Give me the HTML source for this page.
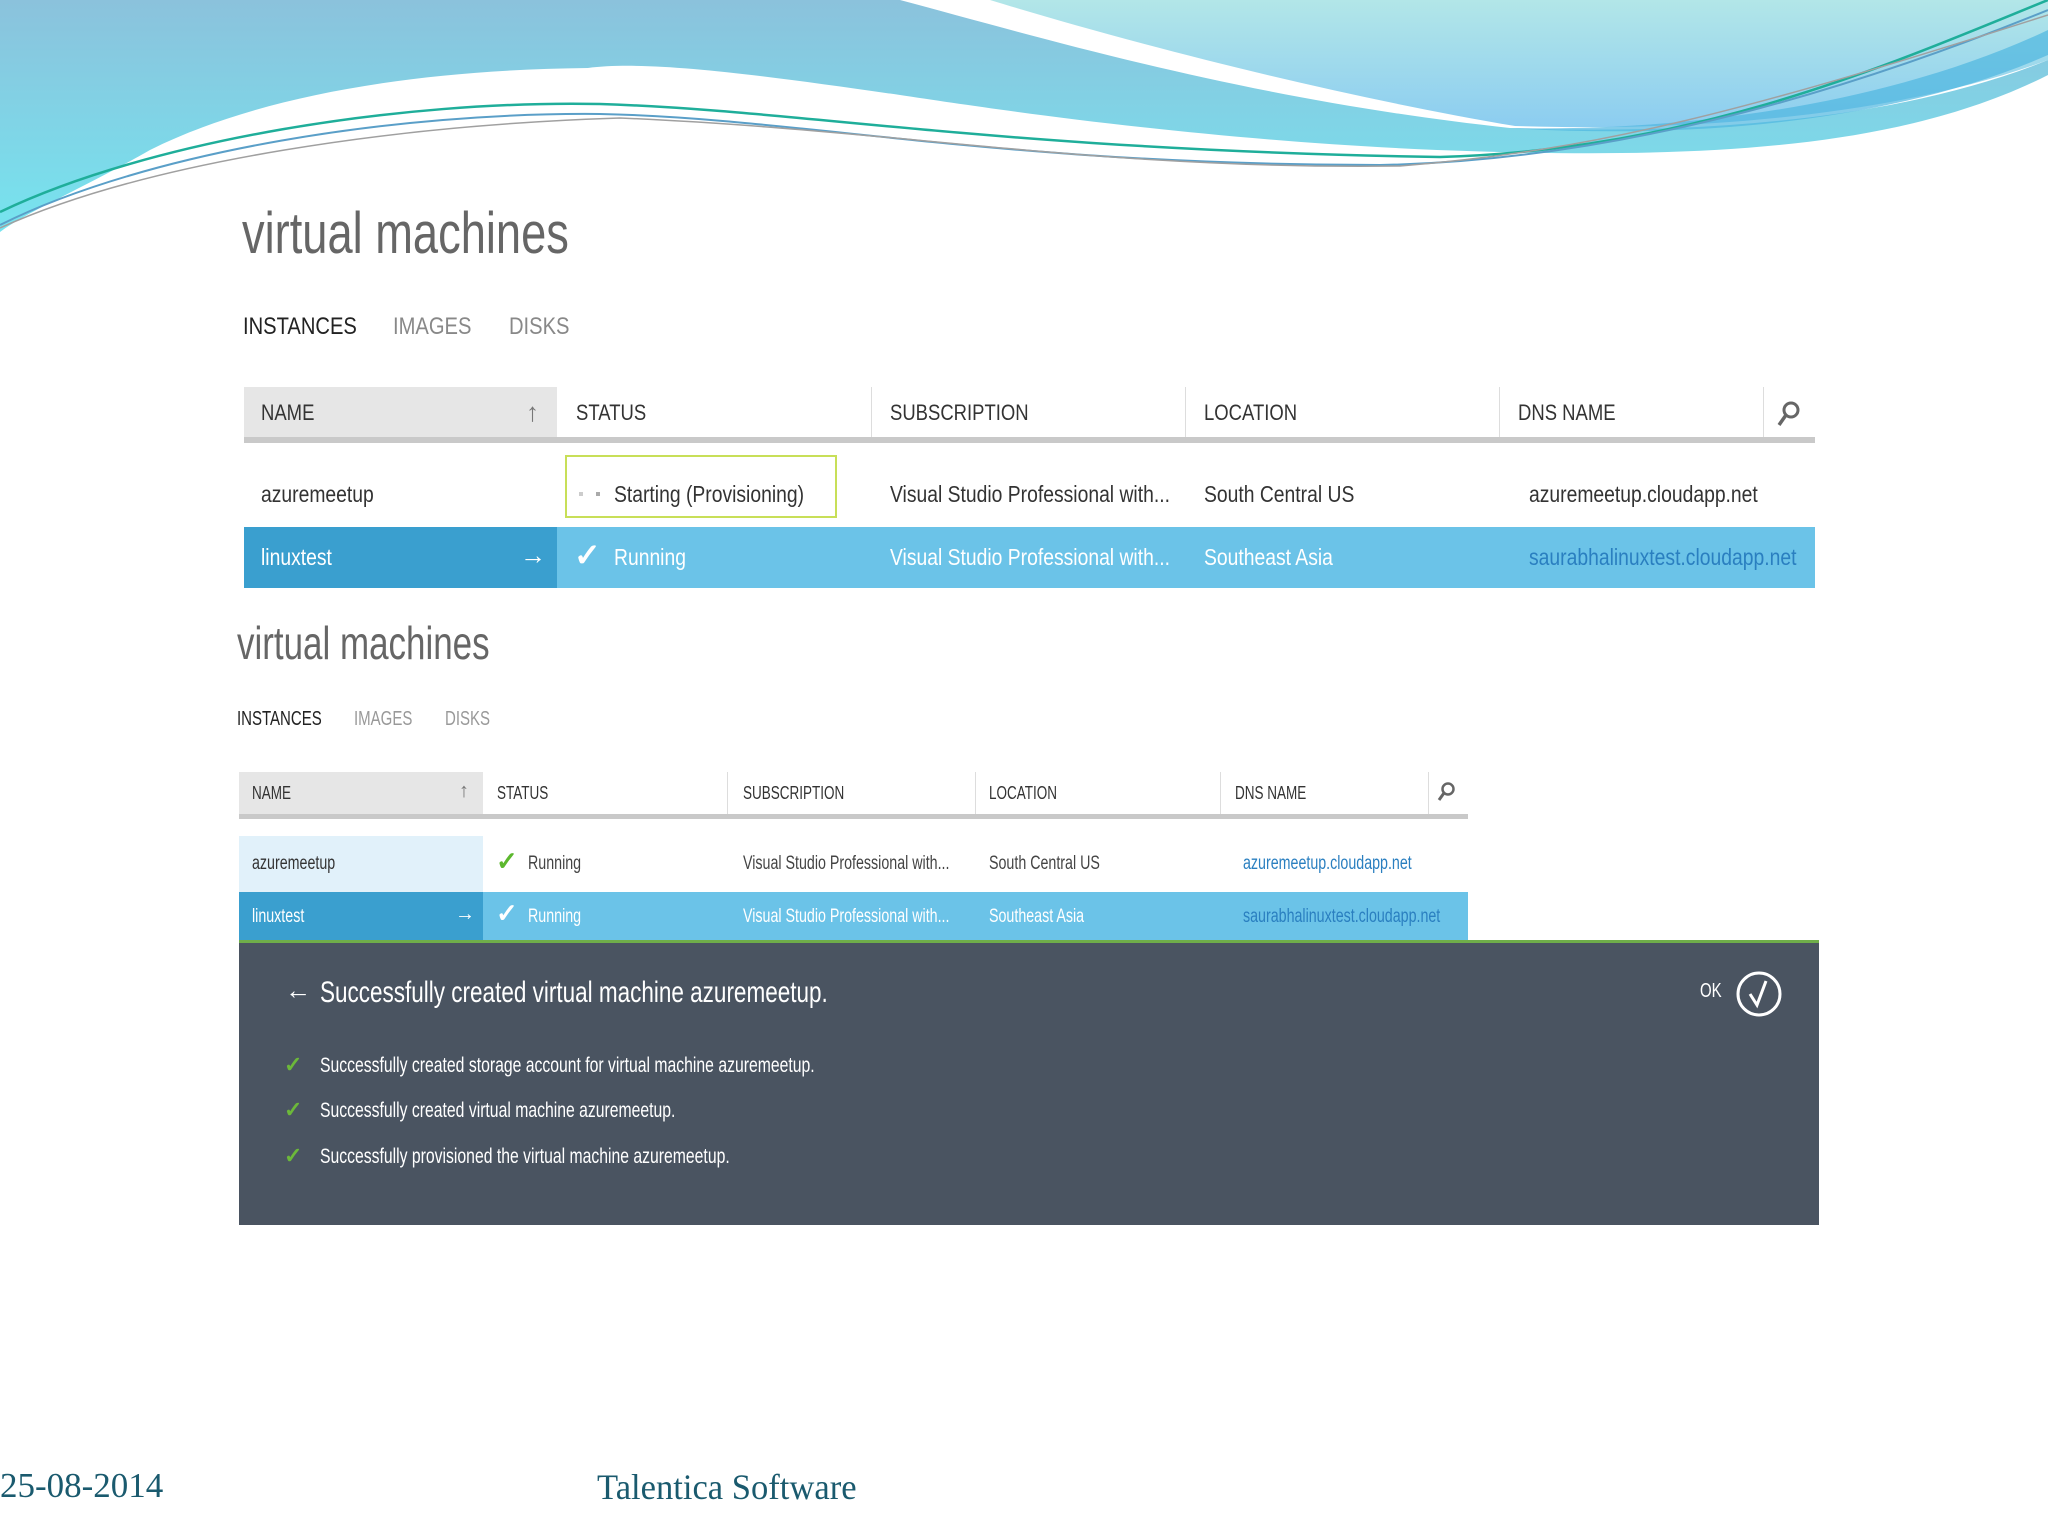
<!DOCTYPE html>
<html><head><meta charset="utf-8"><style>
*{margin:0;padding:0;box-sizing:border-box}
body{width:2048px;height:1536px;position:relative;overflow:hidden;background:#fff;font-family:"Liberation Sans",sans-serif}
.a{position:absolute;white-space:nowrap;transform-origin:left center}
.c{transform:scaleX(.84)}
.d{transform:scaleX(.75)}
.bx{position:absolute}
</style></head><body>
<svg class="bx" style="left:0;top:0" width="2048" height="260" viewBox="0 0 2048 260">
<defs>
<linearGradient id="g1" x1="0" y1="0" x2="0" y2="1"><stop offset="0" stop-color="#8bc2dc"/><stop offset="1" stop-color="#76e4ef"/></linearGradient>
<linearGradient id="g2" x1="0" y1="0" x2="0" y2="1"><stop offset="0" stop-color="#b2e6e8"/><stop offset="1" stop-color="#8ccdf0"/></linearGradient>
</defs>
<path d="M0 0 H2048 V75 C1900 150 1700 160 1437 150 C1200 140 1000 110 900 95 C760 75 650 60 588 68 C400 70 250 100 150 150 C80 190 30 210 0 232 Z" fill="url(#g1)"/>
<path d="M900 0 H2048 V60 C1900 120 1700 135 1510 128 C1250 100 1050 40 900 0 Z" fill="#fff"/>
<path d="M990 0 H2048 V60 C1900 115 1700 132 1515 126 C1330 95 1120 40 990 0 Z" fill="url(#g2)"/>
<path d="M1510 128 C1700 132 1900 100 2048 30 V55 C1900 120 1700 140 1510 128 Z" fill="#4fb6e0" opacity=".7"/>
<path d="M0 212 C150 140 400 100 600 104 C800 110 1000 150 1440 157 C1700 150 1900 60 2048 0" fill="none" stroke="#1fae9a" stroke-width="2.5"/>
<path d="M0 225 C150 150 400 112 600 114 C800 118 1000 165 1380 165 C1650 160 1900 70 2048 10" fill="none" stroke="#5a9fc8" stroke-width="2"/>
<path d="M0 228 C150 160 400 125 620 118 C900 130 1100 170 1400 166 C1600 150 1750 110 2048 15" fill="none" stroke="#a0a0a0" stroke-width="1.5"/>
</svg>

<!-- section 1 -->
<div class="a" style="left:242px;top:200px;font-size:58px;color:#666;transform:scaleX(.78)">virtual machines</div>
<div class="a c" style="left:243px;top:313px;font-size:24px;color:#222">INSTANCES</div>
<div class="a c" style="left:393px;top:313px;font-size:24px;color:#888">IMAGES</div>
<div class="a c" style="left:509px;top:313px;font-size:24px;color:#888">DISKS</div>

<div class="bx" style="left:244px;top:387px;width:313px;height:51px;background:#e6e6e6"></div>
<div class="bx" style="left:244px;top:437px;width:1571px;height:6px;background:#c9c9c9"></div>
<div class="bx" style="left:871px;top:387px;width:1px;height:50px;background:#ddd"></div>
<div class="bx" style="left:1185px;top:387px;width:1px;height:50px;background:#ddd"></div>
<div class="bx" style="left:1499px;top:387px;width:1px;height:50px;background:#ddd"></div>
<div class="bx" style="left:1763px;top:387px;width:1px;height:50px;background:#ddd"></div>
<div class="a c" style="left:261px;top:400px;font-size:22px;color:#333">NAME</div>
<div class="a" style="left:526px;top:397px;font-size:26px;color:#777;font-weight:bold">↑</div>
<div class="a c" style="left:576px;top:400px;font-size:22px;color:#333">STATUS</div>
<div class="a c" style="left:890px;top:400px;font-size:22px;color:#333">SUBSCRIPTION</div>
<div class="a c" style="left:1204px;top:400px;font-size:22px;color:#333">LOCATION</div>
<div class="a c" style="left:1518px;top:400px;font-size:22px;color:#333">DNS NAME</div>
<svg class="bx" style="left:1775px;top:400px" width="26" height="28"><circle cx="16" cy="10" r="7" fill="none" stroke="#666" stroke-width="3"/><path d="M11 15 L4 25" stroke="#666" stroke-width="3.5"/></svg>

<div class="bx" style="left:565px;top:455px;width:272px;height:63px;border:2px solid #c8df58"></div>
<div class="bx" style="left:579px;top:492px;width:4px;height:4px;background:#ccc"></div>
<div class="bx" style="left:596px;top:492px;width:4px;height:4px;background:#aaa"></div>
<div class="a c" style="left:261px;top:481px;font-size:23px;color:#333">azuremeetup</div>
<div class="a c" style="left:614px;top:481px;font-size:23px;color:#333">Starting (Provisioning)</div>
<div class="a c" style="left:890px;top:481px;font-size:23px;color:#333">Visual Studio Professional with...</div>
<div class="a c" style="left:1204px;top:481px;font-size:23px;color:#333">South Central US</div>
<div class="a c" style="left:1529px;top:481px;font-size:23px;color:#333">azuremeetup.cloudapp.net</div>

<div class="bx" style="left:244px;top:527px;width:313px;height:61px;background:#3a9fcf"></div>
<div class="bx" style="left:557px;top:527px;width:1258px;height:61px;background:#6bc3e8"></div>
<div class="a c" style="left:261px;top:544px;font-size:23px;color:#fff">linuxtest</div>
<div class="a" style="left:520px;top:540px;font-size:26px;color:#fff;font-weight:bold">→</div>
<div class="a" style="left:574px;top:536px;font-size:32px;color:#fff;font-weight:bold">✓</div>
<div class="a c" style="left:614px;top:544px;font-size:23px;color:#fff">Running</div>
<div class="a c" style="left:890px;top:544px;font-size:23px;color:#fff">Visual Studio Professional with...</div>
<div class="a c" style="left:1204px;top:544px;font-size:23px;color:#fff">Southeast Asia</div>
<div class="a c" style="left:1529px;top:544px;font-size:23px;color:#2a7fc0">saurabhalinuxtest.cloudapp.net</div>

<!-- section 2 -->
<div class="a" style="left:237px;top:616px;font-size:46px;color:#666;transform:scaleX(.76)">virtual machines</div>
<div class="a d" style="left:237px;top:708px;font-size:20px;color:#222">INSTANCES</div>
<div class="a d" style="left:354px;top:708px;font-size:20px;color:#999">IMAGES</div>
<div class="a d" style="left:445px;top:708px;font-size:20px;color:#999">DISKS</div>

<div class="bx" style="left:239px;top:772px;width:244px;height:43px;background:#e6e6e6"></div>
<div class="bx" style="left:239px;top:814px;width:1229px;height:5px;background:#c9c9c9"></div>
<div class="bx" style="left:727px;top:772px;width:1px;height:42px;background:#ddd"></div>
<div class="bx" style="left:975px;top:772px;width:1px;height:42px;background:#ddd"></div>
<div class="bx" style="left:1220px;top:772px;width:1px;height:42px;background:#ddd"></div>
<div class="bx" style="left:1428px;top:772px;width:1px;height:42px;background:#ddd"></div>
<div class="a d" style="left:252px;top:783px;font-size:18px;color:#333">NAME</div>
<div class="a" style="left:459px;top:780px;font-size:20px;color:#777;font-weight:bold">↑</div>
<div class="a d" style="left:497px;top:783px;font-size:18px;color:#333">STATUS</div>
<div class="a d" style="left:743px;top:783px;font-size:18px;color:#333">SUBSCRIPTION</div>
<div class="a d" style="left:989px;top:783px;font-size:18px;color:#333">LOCATION</div>
<div class="a d" style="left:1235px;top:783px;font-size:18px;color:#333">DNS NAME</div>
<svg class="bx" style="left:1436px;top:781px" width="20" height="22"><circle cx="12" cy="8" r="5.5" fill="none" stroke="#666" stroke-width="2.5"/><path d="M8 12 L3 19" stroke="#666" stroke-width="3"/></svg>

<div class="bx" style="left:239px;top:836px;width:244px;height:56px;background:#e1f1fa"></div>
<div class="a d" style="left:252px;top:853px;font-size:19px;color:#333">azuremeetup</div>
<div class="a" style="left:496px;top:846px;font-size:26px;color:#5cb82e;font-weight:bold">✓</div>
<div class="a d" style="left:528px;top:853px;font-size:19px;color:#444">Running</div>
<div class="a d" style="left:743px;top:853px;font-size:19px;color:#444">Visual Studio Professional with...</div>
<div class="a d" style="left:989px;top:853px;font-size:19px;color:#444">South Central US</div>
<div class="a d" style="left:1243px;top:853px;font-size:19px;color:#2a7fc0">azuremeetup.cloudapp.net</div>

<div class="bx" style="left:239px;top:892px;width:244px;height:48px;background:#3a9fcf"></div>
<div class="bx" style="left:483px;top:892px;width:985px;height:48px;background:#6bc3e8"></div>
<div class="a d" style="left:252px;top:906px;font-size:19px;color:#fff">linuxtest</div>
<div class="a" style="left:455px;top:903px;font-size:20px;color:#fff;font-weight:bold">→</div>
<div class="a" style="left:496px;top:898px;font-size:26px;color:#fff;font-weight:bold">✓</div>
<div class="a d" style="left:528px;top:906px;font-size:19px;color:#fff">Running</div>
<div class="a d" style="left:743px;top:906px;font-size:19px;color:#fff">Visual Studio Professional with...</div>
<div class="a d" style="left:989px;top:906px;font-size:19px;color:#fff">Southeast Asia</div>
<div class="a d" style="left:1243px;top:906px;font-size:19px;color:#2a7fc0">saurabhalinuxtest.cloudapp.net</div>

<div class="bx" style="left:239px;top:940px;width:1580px;height:285px;background:#4a5461;border-top:3px solid #6fae4a"></div>
<div class="a" style="left:285px;top:975px;font-size:26px;color:#fff;font-weight:bold">←</div>
<div class="a d" style="left:320px;top:976px;font-size:30px;color:#fff">Successfully created virtual machine azuremeetup.</div>
<div class="a d" style="left:1700px;top:980px;font-size:20px;color:#fff">OK</div>
<svg class="bx" style="left:1735px;top:969px" width="48" height="50"><circle cx="24" cy="25" r="21" fill="none" stroke="#fff" stroke-width="3"/><path d="M15 25 L22 36 L31 12" fill="none" stroke="#fff" stroke-width="3"/></svg>
<div class="a" style="left:284px;top:1052px;font-size:22px;color:#6cb83a;font-weight:bold">✓</div>
<div class="a d" style="left:320px;top:1054px;font-size:21px;color:#fff">Successfully created storage account for virtual machine azuremeetup.</div>
<div class="a" style="left:284px;top:1097px;font-size:22px;color:#6cb83a;font-weight:bold">✓</div>
<div class="a d" style="left:320px;top:1099px;font-size:21px;color:#fff">Successfully created virtual machine azuremeetup.</div>
<div class="a" style="left:284px;top:1143px;font-size:22px;color:#6cb83a;font-weight:bold">✓</div>
<div class="a d" style="left:320px;top:1145px;font-size:21px;color:#fff">Successfully provisioned the virtual machine azuremeetup.</div>

<div class="a" style="left:0;top:1466px;font-size:35px;color:#1a5a6e;font-family:'Liberation Serif',serif">25-08-2014</div>
<div class="a" style="left:597px;top:1466px;font-size:36px;color:#1a5a6e;font-family:'Liberation Serif',serif;transform:scaleX(.96)">Talentica Software</div>
</body></html>
